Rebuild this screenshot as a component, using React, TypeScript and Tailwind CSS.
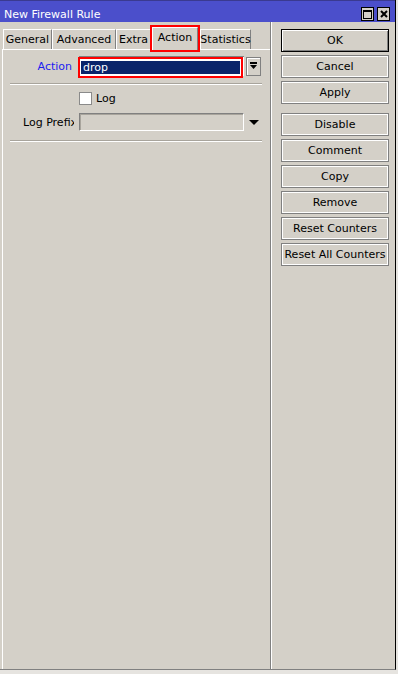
import React from "react";

function Btn({ label, def }: { label: string; def?: boolean }) {
  return (
    <div
      className={
        "w-[108px] h-[23px] flex items-center justify-center bg-[#d4d0c8] border " +
        (def
          ? "border-black shadow-[inset_1px_1px_0_#ffffff,inset_-1px_-1px_0_#808080]"
          : "border-[#808080] shadow-[inset_1px_1px_0_#ffffff,inset_-1px_-1px_0_#ffffff]")
      }
    >
      {label}
    </div>
  );
}

function Tab({ label, w, active }: { label: string; w: string; active?: boolean }) {
  if (active) {
    return (
      <div
        className={
          "relative z-10 mb-[-1px] h-[23px] flex items-start justify-center pt-[4px] bg-[#d4d0c8] border-l border-t border-white border-r border-r-[#808080] outline-2 outline-[#ff0000] outline-offset-[0px] " +
          w
        }
      >
        {label}
      </div>
    );
  }
  return (
    <div
      className={
        "h-[20px] flex items-center justify-center bg-[#d4d0c8] border-l border-t border-white border-r border-r-[#808080] " +
        w
      }
    >
      {label}
    </div>
  );
}

export default function App() {
  return (
    <div className="w-[398px] h-[674px] bg-[#e6e4e0] overflow-hidden font-['DejaVu_Sans',sans-serif] text-[11px] leading-none text-black">
      <div className="w-[396px] h-[670px] bg-[#d4d0c8] flex flex-col border-r border-r-black border-b border-b-[#808080]">
        {/* Title bar */}
        <div className="h-[22px] bg-[#4b4fcb] flex items-center justify-between pl-[4px] pr-[5px] pt-[5px] border-t border-[#3a3a90]">
          <span className="text-white text-[11px]">New Firewall Rule</span>
          <div className="flex gap-[3px]">
            <div className="w-[13px] h-[14px] bg-[#d4d0c8] border border-black flex items-center justify-center">
              <svg width="9" height="9" viewBox="0 0 9 9">
                <rect x="0.5" y="0.5" width="8" height="8" fill="none" stroke="#000" />
                <rect x="0" y="0" width="9" height="2" fill="#000" />
              </svg>
            </div>
            <div className="w-[13px] h-[14px] bg-[#d4d0c8] border border-black flex items-center justify-center">
              <svg width="8" height="8" viewBox="0 0 8 8">
                <path d="M1 1 L7 7 M7 1 L1 7" stroke="#000" strokeWidth="2" />
              </svg>
            </div>
          </div>
        </div>

        {/* Body */}
        <div className="flex-1 flex">
          {/* Left */}
          <div className="w-[270px] flex flex-col pl-[2px] pt-[4px]">
            <div className="flex items-end h-[23px] pl-[1px]">
              <Tab label="General" w="w-[49px]" />
              <Tab label="Advanced" w="w-[64px]" />
              <Tab label="Extra" w="w-[35px]" />
              <div className="w-[1px]" />
              <Tab label="Action" w="w-[46px]" active />
              <div className="w-[2px]" />
              <Tab label="Statistics" w="w-[51px]" />
            </div>
            <div className="flex-1 border-t border-l border-white flex flex-col">
              {/* Action row */}
              <div className="flex items-center mt-[6px] h-[20px]">
                <div className="w-[69px] text-right text-[#1c1cf0]">Action</div>
                <div className="relative ml-[7px] w-[165px] h-[20px] bg-white border-t border-l border-[#808080] flex items-center px-[1px]">
                  <div className="w-[159px] h-[13px] bg-[#0a246a] text-white flex items-center pl-[2px] mt-[1px]">drop</div>
                  <div className="absolute left-[-2px] top-[0px] w-[165px] h-[21px] border-2 border-[#ff0000]" />
                </div>
                <div className="ml-[2px] w-[15px] h-[19px] bg-[#d4d0c8] border border-[#808080] shadow-[inset_1px_1px_0_#ffffff] flex items-center justify-center">
                  <svg width="9" height="8" viewBox="0 0 9 8">
                    <rect x="1" y="0" width="7" height="2" fill="#000" />
                    <path d="M1 3 H8 L4.5 7 Z" fill="#000" />
                  </svg>
                </div>
              </div>
              {/* separator */}
              <div className="mt-[7px] ml-[7px] w-[252px] h-[2px] border-t border-[#a8a49c] border-b border-b-white" />
              {/* Log row */}
              <div className="flex items-center mt-[7px] h-[13px]">
                <div className="ml-[76px] w-[13px] h-[13px] bg-white border border-[#8a8a8a]" />
                <span className="ml-[4px]">Log</span>
              </div>
              {/* Log Prefix row */}
              <div className="flex items-center mt-[8px] h-[18px]">
                <div className="ml-[20px] w-[51px] overflow-hidden whitespace-nowrap">Log Prefix</div>
                <div className="ml-[5px] w-[165px] h-[18px] bg-[#d4d0c8] border border-t-[#808080] border-l-[#808080] border-b-white border-r-white shadow-[inset_1px_1px_0_#a8a49c]" />
                <svg className="ml-[5px]" width="10" height="5" viewBox="0 0 10 5">
                  <path d="M0 0 H10 L5 5 Z" fill="#000" />
                </svg>
              </div>
              <div className="mt-[9px] ml-[7px] w-[252px] h-[2px] border-t border-[#a8a49c] border-b border-b-white" />
            </div>
          </div>

          {/* Right */}
          <div className="flex-1 border-l border-l-[#808080] flex flex-col pl-[10px] pt-[7px] gap-[3px] shadow-[inset_1px_0_0_#ffffff]">
            <Btn label="OK" def />
            <Btn label="Cancel" />
            <Btn label="Apply" />
            <div className="h-[3px]" />
            <Btn label="Disable" />
            <Btn label="Comment" />
            <Btn label="Copy" />
            <Btn label="Remove" />
            <Btn label="Reset Counters" />
            <Btn label="Reset All Counters" />
          </div>
        </div>
      </div>
    </div>
  );
}
